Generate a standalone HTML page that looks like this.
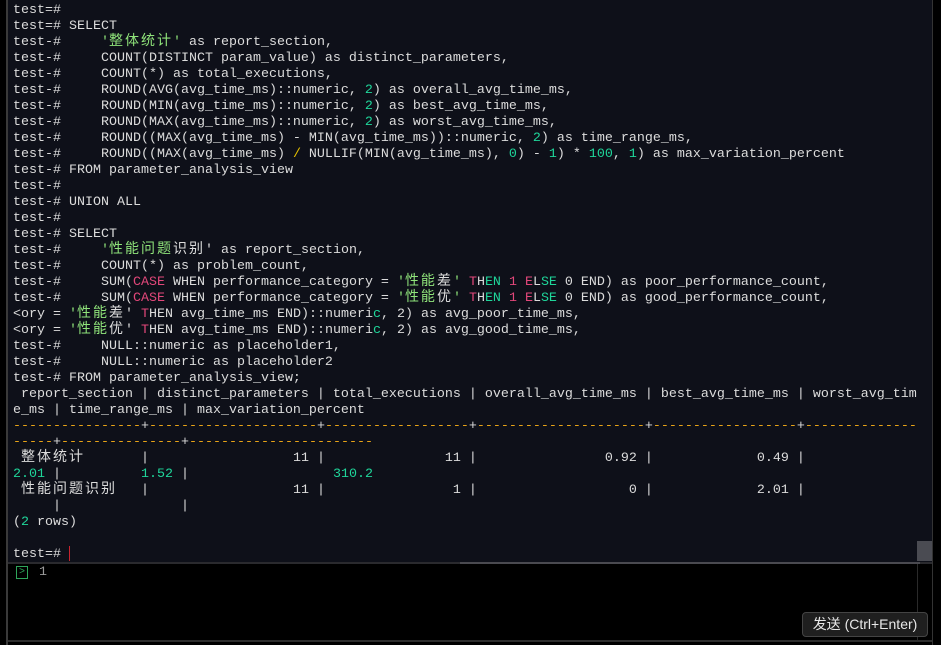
<!DOCTYPE html>
<html><head><meta charset="utf-8"><style>
html,body{margin:0;padding:0;width:941px;height:645px;overflow:hidden;background:#000;}
#term{position:absolute;left:8px;top:0;width:924px;height:562px;background:#0e1019;}
#lv{position:absolute;left:6px;top:0;width:2px;height:645px;background:#3a3a3a;}
#rv{position:absolute;left:932px;top:0;width:1px;height:645px;background:#333;}
pre{position:absolute;left:13px;top:3px;margin:0;font-family:"Liberation Mono",monospace;font-size:13.33px;line-height:16px;color:#dcdcdc;white-space:pre;}
.c{font-family:"Noto Sans CJK SC",sans-serif;display:inline-block;height:16px;line-height:16px;vertical-align:top;font-size:14px;letter-spacing:2px;position:relative;top:-3px;}
.g{color:#8fe37a}.n{color:#1fd69a}.r{color:#e2477a}.y{color:#e5c100}.o{color:#e8a317}
#sep{position:absolute;left:8px;top:562px;width:924px;height:2px;background:#2a2a2e;}
#sep2{position:absolute;left:460px;top:562px;width:460px;height:2px;background:#4a4a50;}
#thumb{position:absolute;left:917px;top:541px;width:15px;height:20px;background:#4a4b52;}
#bv{position:absolute;left:917px;top:564px;width:1px;height:76px;background:#2a2a2a;}
#bot{position:absolute;left:8px;top:640px;width:924px;height:2px;background:#2e2e2e;}
#cursor{position:absolute;left:69px;top:546px;width:1px;height:15px;background:#c8242f;}
#icon{position:absolute;left:16px;top:566px;width:10px;height:11px;border:1px solid #2ea55a;color:#2ea55a;font:10px/11px "Liberation Mono",monospace;text-align:center;}
#one{position:absolute;left:39px;top:565px;font:13.33px/16px "Liberation Mono",monospace;color:#9a9a9a;}
#btn{position:absolute;left:802px;top:612px;width:124px;height:23px;border:1px solid #444;border-radius:4px;background:#1f1f1f;color:#e8e8e8;font:14px/23px "Liberation Sans","Noto Sans CJK SC",sans-serif;text-align:center;}
</style></head><body>
<div id="term"></div><div id="lv"></div><div id="rv"></div>
<pre>test=#
test=# SELECT
test-#     <span class="g">'<span class="c">整体统计</span>'</span> as report_section,
test-#     COUNT(DISTINCT param_value) as distinct_parameters,
test-#     COUNT(*) as total_executions,
test-#     ROUND(AVG(avg_time_ms)::numeric, <span class="n">2</span>) as overall_avg_time_ms,
test-#     ROUND(MIN(avg_time_ms)::numeric, <span class="n">2</span>) as best_avg_time_ms,
test-#     ROUND(MAX(avg_time_ms)::numeric, <span class="n">2</span>) as worst_avg_time_ms,
test-#     ROUND((MAX(avg_time_ms) - MIN(avg_time_ms))::numeric, <span class="n">2</span>) as time_range_ms,
test-#     ROUND((MAX(avg_time_ms) <span class="y">/</span> NULLIF(MIN(avg_time_ms), <span class="n">0</span>) - <span class="n">1</span>) * <span class="n">100</span>, <span class="n">1</span>) as max_variation_percent
test-# FROM parameter_analysis_view
test-#
test-# UNION ALL
test-#
test-# SELECT
test-#     <span class="g">'<span class="c">性能问题</span></span><span class="c">识别</span>' as report_section,
test-#     COUNT(*) as problem_count,
test-#     SUM(<span class="r">CASE</span> WHEN performance_category = <span class="g">'<span class="c">性能</span></span><span class="c">差</span><span class="g">'</span> <span class="r">T</span>H<span class="n">EN</span> <span class="r">1</span> <span class="r">E</span>L<span class="n">SE</span> 0 END) as poor_performance_count,
test-#     SUM(<span class="r">CASE</span> WHEN performance_category = <span class="g">'<span class="c">性能</span></span><span class="c">优</span><span class="g">'</span> <span class="r">T</span>H<span class="n">EN</span> <span class="r">1</span> <span class="r">E</span>L<span class="n">SE</span> 0 END) as good_performance_count,
&lt;ory = <span class="g">'<span class="c">性能</span></span><span class="c">差</span>' <span class="r">T</span>HEN avg_time_ms END)::numeri<span class="n">c</span>, 2) as avg_poor_time_ms,
&lt;ory = <span class="g">'<span class="c">性能</span></span><span class="c">优</span>' <span class="r">T</span>HEN avg_time_ms END)::numeri<span class="n">c</span>, 2) as avg_good_time_ms,
test-#     NULL::numeric as placeholder1,
test-#     NULL::numeric as placeholder2
test-# FROM parameter_analysis_view;
 report_section | distinct_parameters | total_executions | overall_avg_time_ms | best_avg_time_ms | worst_avg_tim
e_ms | time_range_ms | max_variation_percent
<span class="o">----------------</span>+<span class="o">---------------------</span>+<span class="o">------------------</span>+<span class="o">---------------------</span>+<span class="o">------------------</span>+<span class="o">--------------</span>
<span class="o">-----</span>+<span class="o">---------------</span>+<span class="o">-----------------------</span>
 <span class="c">整体统计</span>       |                  11 |               11 |                0.92 |             0.49 |
<span class="n">2.01</span> |          <span class="n">1.52</span> |                  <span class="n">310.2</span>
 <span class="c">性能问题识别</span>   |                  11 |                1 |                   0 |             2.01 |
     |               |
(<span class="n">2</span> rows)

test=#</pre>
<div id="cursor"></div>
<div id="thumb"></div>
<div id="sep"></div><div id="sep2"></div><div id="bv"></div><div id="bot"></div>
<div id="icon">&gt;</div><div id="one">1</div>
<div id="btn">发送 (Ctrl+Enter)</div>
</body></html>
